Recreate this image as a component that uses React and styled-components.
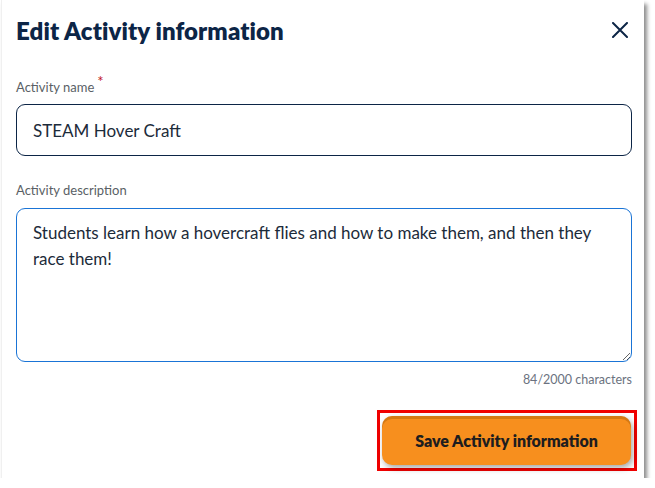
import React, { useState } from "react";
import styled, { createGlobalStyle } from "styled-components";

const GlobalStyle = createGlobalStyle`
    body {
        margin: 0;
        background: #ffffff;
        font-family: "Lato", "Open Sans", sans-serif;
    }
`;

const Panel = styled.div`
    box-sizing: border-box;
    width: 643px;
    height: 478px;
    margin-left: 1px;
    background: #ffffff;
    border-left: 1px solid #f0f0f0;
    box-shadow: 3px 4px 4px rgba(0, 0, 0, 0.45);
    padding: 15px 12px 0 14px;
    display: flex;
    flex-direction: column;
`;

const Header = styled.div`
    display: flex;
    justify-content: space-between;
    align-items: center;
    height: 32px;
`;

const Title = styled.h1`
    margin: 0;
    font-size: 24px;
    line-height: 32px;
    font-weight: 800;
    color: #0c2546;
    letter-spacing: 0.1px;
`;

const CloseButton = styled.button`
    border: none;
    background: transparent;
    padding: 0;
    margin-right: 4px;
    margin-top: -3px;
    width: 16px;
    height: 16px;
    cursor: pointer;
    display: flex;
`;

const Label = styled.label`
    display: block;
    margin-top: ${(props) => props.top}px;
    font-size: 13px;
    line-height: 16px;
    color: #5a5f66;
`;

const Required = styled.span`
    color: #c0141e;
    font-size: 15px;
    position: relative;
    top: -5px;
    margin-left: 3px;
`;

const TextInput = styled.input`
    box-sizing: border-box;
    width: 100%;
    height: 52px;
    margin-top: 9px;
    border: 1px solid #0c2546;
    border-radius: 9px;
    padding: 0 16px;
    font-family: "Lato", "Open Sans", sans-serif;
    font-size: 17px;
    color: #1c2b3a;
    outline: none;
`;

const TextArea = styled.textarea`
    box-sizing: border-box;
    width: 100%;
    height: 154px;
    margin-top: 10px;
    border: 1px solid #1a74d6;
    border-radius: 9px;
    padding: 11px 16px;
    font-family: "Lato", "Open Sans", sans-serif;
    font-size: 17px;
    line-height: 26px;
    color: #1c2b3a;
    outline: none;
    resize: vertical;
    display: block;
`;

const Counter = styled.div`
    text-align: right;
    margin-top: 10px;
    font-size: 12.5px;
    line-height: 16px;
    color: #6b7280;
`;

const Footer = styled.div`
    display: flex;
    justify-content: flex-end;
    margin-top: 22px;
    margin-right: -5px;
`;

const Highlight = styled.div`
    border: 3px solid #f00000;
    padding: 3px 3px 3px 2px;
`;

const SaveButton = styled.button`
    width: 249px;
    height: 49px;
    border: none;
    border-radius: 10px;
    background: #f78f1e;
    box-shadow: inset 0 3px 0 rgba(150, 80, 0, 0.35), 2px 3px 6px rgba(0, 0, 0, 0.35);
    font-family: "Lato", "Open Sans", sans-serif;
    font-weight: 800;
    font-size: 16px;
    color: #1d1d1f;
    cursor: pointer;
`;

const App = () => {
    const [name, setName] = useState("STEAM Hover Craft");
    const [description, setDescription] = useState(
        "Students learn how a hovercraft flies and how to make them, and then they race them!"
    );

    return (
        <>
            <GlobalStyle />
            <Panel>
                <Header>
                    <Title>Edit Activity information</Title>
                    <CloseButton aria-label="Close">
                        <svg width="16" height="16" viewBox="0 0 16 16">
                            <path
                                d="M1 1 L15 15 M15 1 L1 15"
                                stroke="#0c2546"
                                strokeWidth="2"
                                strokeLinecap="round"
                            />
                        </svg>
                    </CloseButton>
                </Header>

                <Label top={31}>
                    Activity name<Required>*</Required>
                </Label>
                <TextInput
                    value={name}
                    onChange={(e) => setName(e.target.value)}
                />

                <Label top={26}>Activity description</Label>
                <TextArea
                    value={description}
                    onChange={(e) => setDescription(e.target.value)}
                />
                <Counter>{description.length}/2000 characters</Counter>

                <Footer>
                    <Highlight>
                        <SaveButton>Save Activity information</SaveButton>
                    </Highlight>
                </Footer>
            </Panel>
        </>
    );
};

export default App;
